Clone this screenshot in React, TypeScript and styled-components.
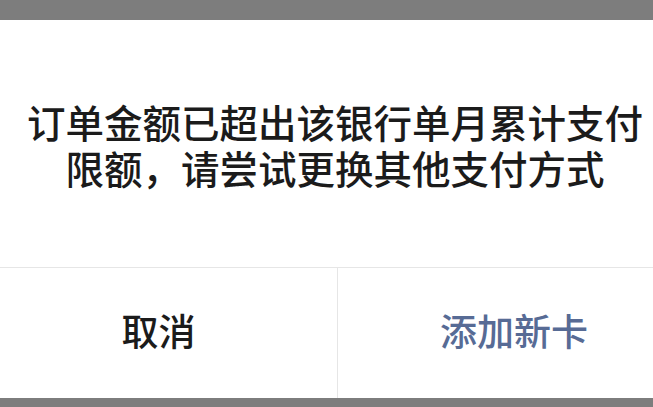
import React from "react";
import styled, { createGlobalStyle } from "styled-components";

const GlobalStyle = createGlobalStyle`
  html, body {
    margin: 0;
    padding: 0;
    background: #7d7d7d;
    overflow: hidden;
  }
  body {
    font-family: "Noto Sans CJK SC", "Noto Sans", sans-serif;
  }
`;

const Screen = styled.div`
  width: 653px;
  height: 407px;
  padding-top: 20px;
  box-sizing: border-box;
  overflow: hidden;
`;

const Dialog = styled.div`
  width: 710px;
  margin-left: -20px;
  height: 378px;
  background: #ffffff;
  border-radius: 16px;
  display: flex;
  flex-direction: column;
`;

const Message = styled.div`
  height: 248px;
  display: flex;
  align-items: center;
  justify-content: center;
  box-sizing: border-box;
  text-align: center;
  font-size: 38.5px;
  font-weight: 500;
  line-height: 46px;
  color: #1b1b1b;
  border-bottom: 1px solid #e6e6e6;
`;

const Actions = styled.div`
  flex: 1;
  display: grid;
  grid-template-columns: 357px 1fr;
`;

const ActionButton = styled.button<{ $primary?: boolean }>`
  border: none;
  background: transparent;
  font-family: inherit;
  font-size: 37px;
  font-weight: 500;
  padding: 0 0 6px;
  color: ${({ $primary }) => ($primary ? "#576b95" : "#1b1b1b")};
  border-left: ${({ $primary }) => ($primary ? "1px solid #e6e6e6" : "none")};
`;

export default function App() {
  return (
    <>
      <GlobalStyle />
      <Screen>
        <Dialog>
          <Message>
            订单金额已超出该银行单月累计支付
            <br />
            限额，请尝试更换其他支付方式
          </Message>
          <Actions>
            <ActionButton>取消</ActionButton>
            <ActionButton $primary>添加新卡</ActionButton>
          </Actions>
        </Dialog>
      </Screen>
    </>
  );
}
